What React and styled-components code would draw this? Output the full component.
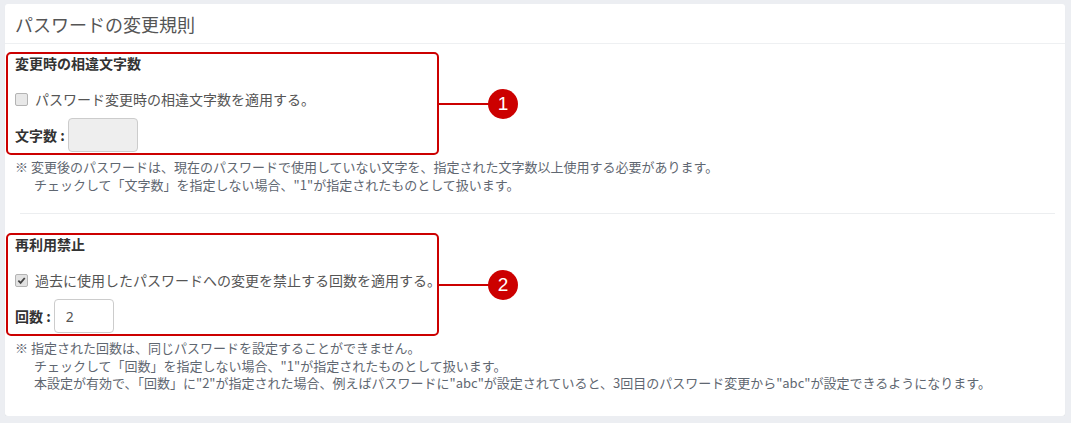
import React from "react";
import styled, { createGlobalStyle } from "styled-components";

const GlobalStyle = createGlobalStyle`
  html, body {
    margin: 0;
    padding: 0;
    background: #eceef2;
  }
  body {
    font-family: "Noto Sans CJK JP", "Noto Sans", sans-serif;
    color: #333;
  }
`;

const Page = styled.div`
  padding: 4px 6px 0 5px;
`;

const Card = styled.div`
  background: #fff;
  border-radius: 3px;
  box-shadow: 0 1px 1px rgba(0, 0, 0, 0.06);
  height: 412px;
  box-sizing: border-box;
`;

const Header = styled.div`
  height: 40px;
  border-bottom: 1px solid #eef0f2;
  display: flex;
  align-items: center;
  padding-left: 10px;
  box-sizing: border-box;
`;

const Title = styled.h2`
  margin: 0;
  font-size: 18px;
  font-weight: 400;
  color: #555;
  line-height: 24px;
`;

const Body = styled.div`
  padding: 8px 10px 0 1px;
`;

const Row = styled.div`
  display: flex;
  align-items: center;
`;

const RuleBox = styled.div`
  width: 433px;
  height: 103px;
  box-sizing: border-box;
  border: 2px solid #cc0000;
  border-radius: 5px;
  padding: 0 7px 1px;
`;

const Connector = styled.div`
  width: 51px;
  height: 2px;
  background: #cc0000;
`;

const Badge = styled.div`
  width: 30px;
  height: 30px;
  border-radius: 50%;
  background: #cc0000;
  color: #fff;
  font-family: "Liberation Sans", Arial, sans-serif;
  font-size: 19px;
  display: flex;
  align-items: center;
  justify-content: center;
  margin-left: -2px;
`;

const RuleTitle = styled.div`
  font-size: 14px;
  font-weight: 700;
  line-height: 18px;
  color: #333;
`;

const CheckRow = styled.label`
  display: flex;
  align-items: center;
  margin-top: 17px;
  height: 20px;
  font-size: 14px;
  color: #555;
  white-space: nowrap;
`;

const CheckBox = styled.span`
  width: 11px;
  height: 11px;
  border: 1px solid #b4b4b4;
  border-radius: 2px;
  background: ${(p) => (p.checked ? "#e2e2e2" : "#e8e8e8")};
  display: flex;
  align-items: center;
  justify-content: center;
  margin-right: 7px;
  flex-shrink: 0;
`;

const FieldRow = styled.div`
  display: flex;
  align-items: center;
  margin-top: 9px;
`;

const FieldLabel = styled.span`
  font-size: 14px;
  font-weight: 700;
  color: #333;
  margin-right: 3px;
  white-space: pre;
`;

const NumInput = styled.input`
  width: ${(p) => p.w}px;
  height: 34px;
  box-sizing: border-box;
  border: 1px solid #ccc;
  border-radius: 4px;
  background: ${(p) => (p.disabled ? "#eeeeee" : "#fff")};
  padding: 0 11px;
  font-size: 14px;
  font-family: "Noto Sans", sans-serif;
  color: #555;
  outline: none;
`;

const Notes = styled.div`
  margin-top: 3px;
  padding-left: 9px;
  font-size: 13px;
  line-height: 17.5px;
  color: #5f6771;
`;

const NoteLine = styled.div`
  padding-left: ${(p) => (p.indent ? "19px" : "0")};
  white-space: nowrap;
`;

const Divider = styled.hr`
  border: 0;
  border-top: 1px solid #eceef0;
  margin: 20px 0 19px 14px;
`;

function Check({ checked }) {
  return (
    <CheckBox checked={checked}>
      {checked && (
        <svg width="9" height="9" viewBox="0 0 10 10">
          <path d="M1.5 5.2 L4 7.6 L8.6 2.2" fill="none" stroke="#444" strokeWidth="2" />
        </svg>
      )}
    </CheckBox>
  );
}

function Rule({ num, title, label, checked, field, value, width, notes }) {
  return (
    <>
      <Row>
        <RuleBox>
          <RuleTitle>{title}</RuleTitle>
          <CheckRow>
            <Check checked={checked} />
            {label}
          </CheckRow>
          <FieldRow>
            <FieldLabel>{field} :</FieldLabel>
            <NumInput w={width} disabled={!checked} defaultValue={value} readOnly />
          </FieldRow>
        </RuleBox>
        <Connector />
        <Badge>{num}</Badge>
      </Row>
      <Notes>
        {notes.map((n, i) => (
          <NoteLine key={i} indent={i > 0}>
            {n}
          </NoteLine>
        ))}
      </Notes>
    </>
  );
}

export default function App() {
  return (
    <Page>
      <GlobalStyle />
      <Card>
        <Header>
          <Title>パスワードの変更規則</Title>
        </Header>
        <Body>
          <Rule
            num="1"
            title="変更時の相違文字数"
            label="パスワード変更時の相違文字数を適用する。"
            checked={false}
            field="文字数"
            value=""
            width={70}
            notes={[
              "※ 変更後のパスワードは、現在のパスワードで使用していない文字を、指定された文字数以上使用する必要があります。",
              "チェックして「文字数」を指定しない場合、\"1\"が指定されたものとして扱います。",
            ]}
          />
          <Divider />
          <Rule
            num="2"
            title="再利用禁止"
            label="過去に使用したパスワードへの変更を禁止する回数を適用する。"
            checked={true}
            field="回数"
            value="2"
            width={60}
            notes={[
              "※ 指定された回数は、同じパスワードを設定することができません。",
              "チェックして「回数」を指定しない場合、\"1\"が指定されたものとして扱います。",
              "本設定が有効で、「回数」に\"2\"が指定された場合、例えばパスワードに\"abc\"が設定されていると、3回目のパスワード変更から\"abc\"が設定できるようになります。",
            ]}
          />
        </Body>
      </Card>
    </Page>
  );
}
